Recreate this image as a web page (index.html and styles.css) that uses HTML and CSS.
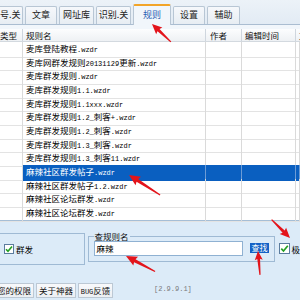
FILE: index.html
```html
<!DOCTYPE html>
<html>
<head>
<meta charset="utf-8">
<link rel="stylesheet" href="styles.css">
</head>
<body>
<div class="app">
  <div class="tabs">
    <div class="tab t0">号.关</div>
    <div class="tab t1">文章</div>
    <div class="tab t2">网址库</div>
    <div class="tab t3">识别.关</div>
    <div class="tab active">规则</div>
    <div class="tab t5">设置</div>
    <div class="tab t6">辅助</div>
  </div>
  <div class="page">
    <div class="head">
      <span>类型</span><span>规则名</span><span>作者</span><span>编辑时间</span><span>文件</span>
    </div>
    <div class="row"><span></span><span>麦库登陆教程<span class="a">.wzdr</span></span><span></span><span></span><span></span></div>
    <div class="row"><span></span><span>麦库网群发规则<span class="a">20131129</span>更新<span class="a">.wzdr</span></span><span></span><span></span><span></span></div>
    <div class="row"><span></span><span>麦库群发规则<span class="a">.wzdr</span></span><span></span><span></span><span></span></div>
    <div class="row"><span></span><span>麦库群发规则<span class="a">1.1.wzdr</span></span><span></span><span></span><span></span></div>
    <div class="row"><span></span><span>麦库群发规则<span class="a">1.1xxx.wzdr</span></span><span></span><span></span><span></span></div>
    <div class="row"><span></span><span>麦库群发规则<span class="a">1.2_</span>刺客<span class="a">+.wzdr</span></span><span></span><span></span><span></span></div>
    <div class="row"><span></span><span>麦库群发规则<span class="a">1.2_</span>刺客<span class="a">.wzdr</span></span><span></span><span></span><span></span></div>
    <div class="row"><span></span><span>麦库群发规则<span class="a">1.3_</span>刺客<span class="a">.wzdr</span></span><span></span><span></span><span></span></div>
    <div class="row"><span></span><span>麦库群发规则<span class="a">1.3_</span>刺客<span class="a">11.wzdr</span></span><span></span><span></span><span></span></div>
    <div class="row sel"><span></span><span>麻辣社区群发帖子<span class="a">.wzdr</span></span><span></span><span></span><span></span></div>
    <div class="row"><span></span><span>麻辣社区群发帖子<span class="a">1.2.wzdr</span></span><span></span><span></span><span></span></div>
    <div class="row"><span></span><span>麻辣社区论坛群发<span class="a">.wzdr</span></span><span></span><span></span><span></span></div>
    <div class="row"><span></span><span>麻辣社区论坛群发<span class="a">.wzdr</span></span><span></span><span></span><span></span></div>
  </div>
  <div class="panel">
    <div class="opts">
      <div class="gb1">
        <svg class="cb" width="10" height="10" viewBox="0 0 10 10"><rect x="0.5" y="0.5" width="9" height="9" fill="#fff" stroke="#5b7c9e"/><path d="M2 5.2 L4 7.3 L8 2.6" stroke="#23a023" stroke-width="1.6" fill="none"/></svg>
        <span>群发</span>
      </div>
      <fieldset class="gb2">
        <legend>查规则名</legend>
        <div class="inp">麻辣</div>
        <div class="find">查找</div>
      </fieldset>
      <div class="cb2">
        <svg class="cb" width="11" height="11" viewBox="0 0 11 11"><rect x="0.5" y="0.5" width="10" height="10" fill="#fff" stroke="#5b7c9e"/><path d="M2.3 5.6 L4.5 8 L8.8 2.8" stroke="#23a023" stroke-width="1.7" fill="none"/></svg>
        <span>极</span>
      </div>
    </div>
    <div class="foot">
      <div class="btn b1">您的权限</div>
      <div class="btn b2">关于神器</div>
      <div class="btn b3"><span class="a">BUG</span>反馈</div>
      <div class="ver">[2.9.9.1]</div>
    </div>
  </div>
  <svg class="arrows" width="300" height="300" viewBox="0 0 300 300">
    <g fill="#e3141b">
      <g transform="translate(152 24) rotate(-136.5)"><polygon points="0,0 -10,-4.5 -9,-1.5 -26,-0.6 -26,0.6 -9,1.5 -10,4.5"/></g>
      <g transform="translate(129 175) rotate(-147.2)"><polygon points="0,0 -11,-5 -10,-1.6 -37,-0.6 -37,0.6 -10,1.6 -11,5"/></g>
      <g transform="translate(126 256) rotate(-151.8)"><polygon points="0,0 -11,-5 -10,-1.6 -33,-0.6 -33,0.6 -10,1.6 -11,5"/></g>
      <g transform="translate(258 251) rotate(-94.8)"><polygon points="0,0 -9,-4 -8,-1.4 -24,-0.6 -24,0.6 -8,1.4 -9,4"/></g>
      <g transform="translate(290 238) rotate(45)"><polygon points="0,0 -10,-4.5 -9,-1.5 -26,-0.6 -26,0.6 -9,1.5 -10,4.5"/></g>
    </g>
  </svg>
</div>
</body>
</html>
```
FILE: styles.css
```css
html, body {
  margin: 0;
  padding: 0;
}
body {
  width: 300px;
  height: 300px;
  overflow: hidden;
  background: #dcebf8;
  font-family: "Noto Sans CJK SC", sans-serif;
  font-size: 8.5px;
  color: #000;
}
.app {
  position: relative;
  width: 300px;
  height: 300px;
  overflow: hidden;
}
.a {
  font-family: "Liberation Mono", monospace;
  font-size: 7px;
}
.tabs {
  height: 24px;
  display: flex;
  align-items: flex-end;
  gap: 2px;
  background: linear-gradient(#ecf2f8, #e2ebf4);
  border-bottom: 1px solid #aabdd1;
}
.tab {
  box-sizing: border-box;
  height: 18px;
  border: 1px solid #b8c6d4;
  border-bottom: none;
  border-radius: 2px 2px 0 0;
  background: linear-gradient(#f6f8fb, #e7edf3);
  font-size: 9px;
  line-height: 16px;
  text-align: center;
  color: #222;
  white-space: nowrap;
}
.t0 { width: 27px; margin-left: -4px; text-align: left; padding-left: 3px; }
.t1 { width: 32px; }
.t2 { width: 35px; }
.t3 { width: 35px; }
.active {
  width: 38px;
  height: 21px;
  margin-bottom: -1px;
  border-top: 2px solid #f2a428;
  background: #f1f6fb;
  color: #2a62b4;
  line-height: 18px;
}
.t5 { width: 32px; }
.t6 { width: 33px; }
.page {
  background: #f1f6fb;
  padding-top: 4px;
}
.head {
  display: grid;
  grid-template-columns: 23px 183px 36px 54px 1fr;
  height: 13px;
  box-sizing: border-box;
  border-bottom: 1px solid #d3d9df;
  background: linear-gradient(#fcfdfe, #eef1f4);
}
.head > span {
  border-right: 1px solid #cfd6de;
  line-height: 12px;
  padding-left: 3px;
  white-space: nowrap;
  color: #111;
}
.head > span:first-child { padding-left: 0; }
.head > span:nth-child(3) { padding-left: 4px; }
.row {
  display: grid;
  grid-template-columns: 23px 183px 36px 54px 1fr;
  height: 13.67px;
  background: #fff;
}
.row > span {
  border-right: 1px solid #dadada;
  border-bottom: 1px solid #e3e3e3;
  line-height: 12.67px;
  padding-left: 3px;
  white-space: nowrap;
}
.row.sel > span:not(:first-child) {
  background: #0a5fc0;
  color: #fff;
  border-right-color: #6b9bd6;
  border-bottom-color: #0a5fc0;
}
.panel {
  border-top: 1px solid #a5bed6;
  padding-top: 12px;
  height: 80px;
  box-sizing: border-box;
}
.opts {
  display: flex;
  align-items: flex-start;
}
.gb1 {
  box-sizing: border-box;
  margin-left: -1px;
  width: 87px;
  height: 32px;
  border: 1px solid #9fbad4;
  display: flex;
  align-items: center;
  padding-left: 4px;
  gap: 2px;
}
.cb { display: block; }
.gb2 {
  margin: -1px 0 0 3px;
  width: 191px;
  box-sizing: border-box;
  border: 1px solid #9fbad4;
  padding: 0 5px 5px;
  min-width: 0;
  display: flex;
  align-items: center;
}
.gb2 legend {
  padding: 0 1px;
  line-height: 9px;
  font-size: 8.5px;
  color: #111;
}
.inp {
  box-sizing: border-box;
  width: 151px;
  height: 15px;
  border: 1px solid #8fb1d2;
  background: #fff;
  line-height: 13px;
  padding-left: 2px;
}
.find {
  margin-left: 7px;
  width: 20px;
  height: 10px;
  background: #1462c6;
  color: #fff;
  line-height: 10px;
  text-align: center;
  font-size: 8px;
}
.cb2 {
  margin: 10px 0 0 4px;
  display: flex;
  align-items: center;
  gap: 1px;
}
.foot {
  margin-top: 18px;
  display: flex;
  align-items: flex-start;
  gap: 2px;
}
.btn {
  box-sizing: border-box;
  height: 15px;
  border: 1px solid #bcc8d4;
  background: linear-gradient(#f8f9fb, #eceff3);
  line-height: 13px;
  text-align: center;
  white-space: nowrap;
  color: #111;
}
.b1 { width: 40px; margin-left: -6px; }
.b2 { width: 40px; }
.b3 { width: 35px; }
.ver {
  margin-left: 39px;
  font-family: "Liberation Mono", monospace;
  font-size: 7px;
  line-height: 12px;
  color: #7a7a7a;
}
.arrows {
  position: absolute;
  left: 0;
  top: 0;
  pointer-events: none;
}
```
